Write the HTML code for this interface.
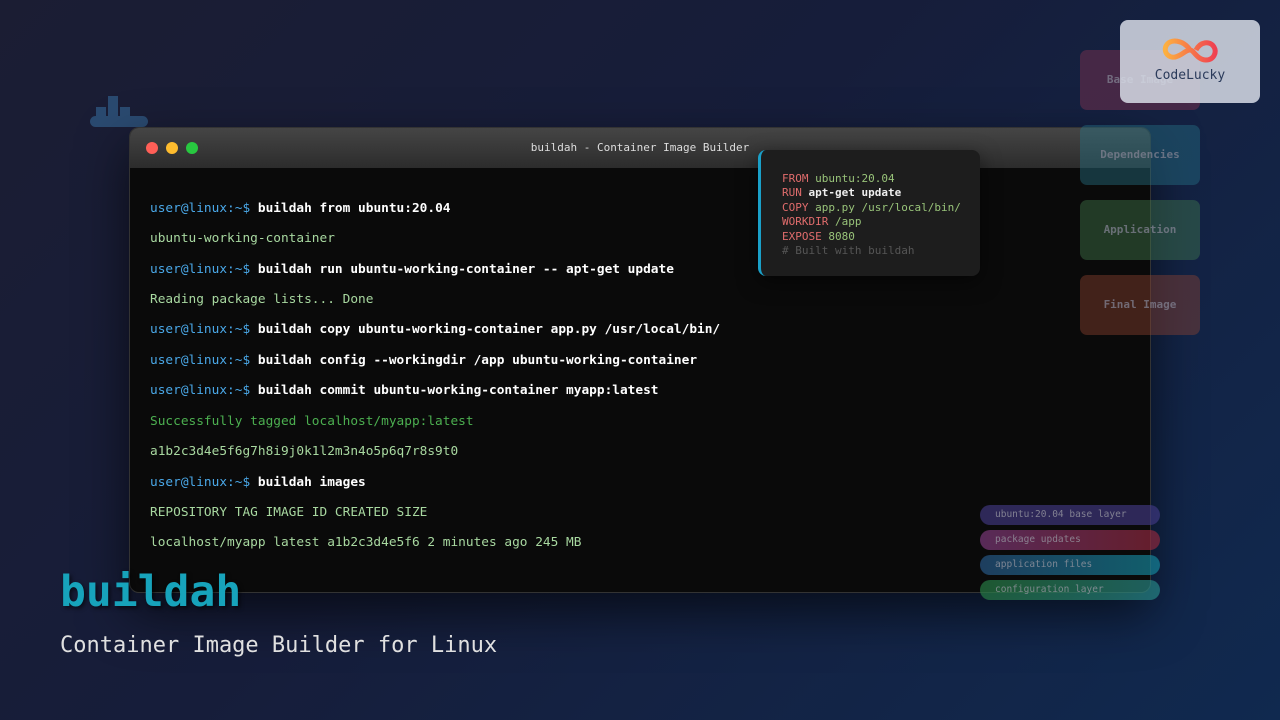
<!DOCTYPE html>
<html><head><style>
*{margin:0;padding:0;box-sizing:border-box}
body{width:1280px;height:720px;overflow:hidden;background:linear-gradient(135deg,#1b1d33 0%,#161d3a 45%,#10294f 100%);font-family:"DejaVu Sans Mono","Liberation Mono",monospace;position:relative}
.term{position:absolute;left:129px;top:127px;width:1022px;height:466px;border-radius:10px;background:#0a0a0a;box-shadow:0 20px 50px rgba(0,0,0,.6);overflow:hidden;border:1px solid #333}
.bar{height:40px;background:linear-gradient(#454545,#2c2c2c);position:relative}
.dot{position:absolute;top:14px;width:12px;height:12px;border-radius:50%}
.ttl{position:absolute;width:100%;text-align:center;top:13px;color:#ddd;font-size:11px}
.ln{position:absolute;left:20px;font-size:12.8px;white-space:pre}
.u{color:#4aa8e8}.c{color:#fff;font-weight:bold}.o{color:#a8d8a0}.g{color:#4caf50}
.df{position:absolute;left:758px;top:150px;width:222px;height:126px;background:#1d1d1d;border-left:3px solid #1aa0c8;border-radius:8px;padding:22px 0 0 21px;font-size:11px;line-height:14.4px;box-shadow:0 6px 20px rgba(0,0,0,.5)}
.k{color:#e06c6c}.v{color:#98c379}.w{color:#eee;font-weight:bold}.cm{color:#555}
.lay{position:absolute;left:1080px;width:120px;height:60px;border-radius:7px;color:rgba(130,130,145,.75);font-size:11px;font-weight:bold;text-align:center;line-height:60px}
.pill{position:absolute;left:980px;width:180px;height:20px;border-radius:10px;font-size:9.5px;color:rgba(150,150,160,.8);padding-left:15px;line-height:20px}
</style></head><body>
<svg style="position:absolute;left:88px;top:96px" width="62" height="32"><rect x="20" y="0" width="10" height="11" fill="#2a4a70"/><rect x="8" y="11" width="10" height="10" fill="#2a4a70"/><rect x="20" y="11" width="10" height="10" fill="#2a4a70"/><rect x="32" y="11" width="10" height="10" fill="#2a4a70"/><rect x="2" y="20" width="58" height="11" rx="5.5" fill="#2a4a70"/></svg>
<div class="term">
<div class="bar"><div class="dot" style="left:16px;background:#ff5f57"></div><div class="dot" style="left:36px;background:#febc2e"></div><div class="dot" style="left:56px;background:#28c840"></div><div class="ttl">buildah - Container Image Builder</div></div>
<div class="ln" style="top:73px"><span class="u">user@linux:~$ </span><span class="c">buildah from ubuntu:20.04</span></div>
<div class="ln o" style="top:103px">ubuntu-working-container</div>
<div class="ln" style="top:134px"><span class="u">user@linux:~$ </span><span class="c">buildah run ubuntu-working-container -- apt-get update</span></div>
<div class="ln o" style="top:164px">Reading package lists... Done</div>
<div class="ln" style="top:194px"><span class="u">user@linux:~$ </span><span class="c">buildah copy ubuntu-working-container app.py /usr/local/bin/</span></div>
<div class="ln" style="top:225px"><span class="u">user@linux:~$ </span><span class="c">buildah config --workingdir /app ubuntu-working-container</span></div>
<div class="ln" style="top:255px"><span class="u">user@linux:~$ </span><span class="c">buildah commit ubuntu-working-container myapp:latest</span></div>
<div class="ln g" style="top:286px">Successfully tagged localhost/myapp:latest</div>
<div class="ln o" style="top:316px">a1b2c3d4e5f6g7h8i9j0k1l2m3n4o5p6q7r8s9t0</div>
<div class="ln" style="top:347px"><span class="u">user@linux:~$ </span><span class="c">buildah images</span></div>
<div class="ln o" style="top:377px">REPOSITORY TAG IMAGE ID CREATED SIZE</div>
<div class="ln o" style="top:407px">localhost/myapp latest a1b2c3d4e5f6 2 minutes ago 245 MB</div>
</div>
<div class="df"><div><span class="k">FROM</span> <span class="v">ubuntu:20.04</span></div><div><span class="k">RUN</span> <span class="w">apt-get update</span></div><div><span class="k">COPY</span> <span class="v">app.py /usr/local/bin/</span></div><div><span class="k">WORKDIR</span> <span class="v">/app</span></div><div><span class="k">EXPOSE</span> <span class="v">8080</span></div><div class="cm"># Built with buildah</div></div>
<div class="lay" style="top:50px;background:rgba(130,50,80,.45)">Base Image</div>
<div class="lay" style="top:125px;background:rgba(40,120,140,.4)">Dependencies</div>
<div class="lay" style="top:200px;background:rgba(70,130,80,.4)">Application</div>
<div class="lay" style="top:275px;background:rgba(150,70,50,.4)">Final Image</div>
<div style="position:absolute;left:1120px;top:20px;width:140px;height:83px;border-radius:8px;background:rgba(215,220,230,.85);text-align:center">
<svg width="60" height="32" style="margin-top:14px" viewBox="0 0 60 32"><defs><linearGradient id="lg"><stop offset="0" stop-color="#fdb040"/><stop offset="1" stop-color="#f04050"/></linearGradient></defs><path d="M30 16C24 6 10 4 6 12c-3 7 4 14 12 10 5-2 8-6 12-6s7 10 16 10c8 0 11-8 8-13-4-7-14-5-18 3" fill="none" stroke="url(#lg)" stroke-width="5"/></svg>
<div style="margin-top:-2px;font-size:13px;color:#2a3a5a;font-family:'DejaVu Sans Mono',monospace">CodeLucky</div></div>
<div class="pill" style="top:505px;background:rgba(70,60,140,.6)">ubuntu:20.04 base layer</div>
<div class="pill" style="top:530px;background:linear-gradient(90deg,rgba(130,60,130,.65),rgba(150,40,60,.65))">package updates</div>
<div class="pill" style="top:555px;background:linear-gradient(90deg,rgba(40,90,140,.65),rgba(20,140,160,.65))">application files</div>
<div class="pill" style="top:580px;background:linear-gradient(90deg,rgba(40,130,70,.65),rgba(40,140,140,.65))">configuration layer</div>
<div style="position:absolute;left:60px;top:567px;font-size:43px;font-weight:bold;color:#17a3bb;text-shadow:2px 2px 4px rgba(0,0,0,.6)">buildah</div>
<div style="position:absolute;left:60px;top:633px;font-size:22px;color:#e0e0e0">Container Image Builder for Linux</div>
</body></html>
